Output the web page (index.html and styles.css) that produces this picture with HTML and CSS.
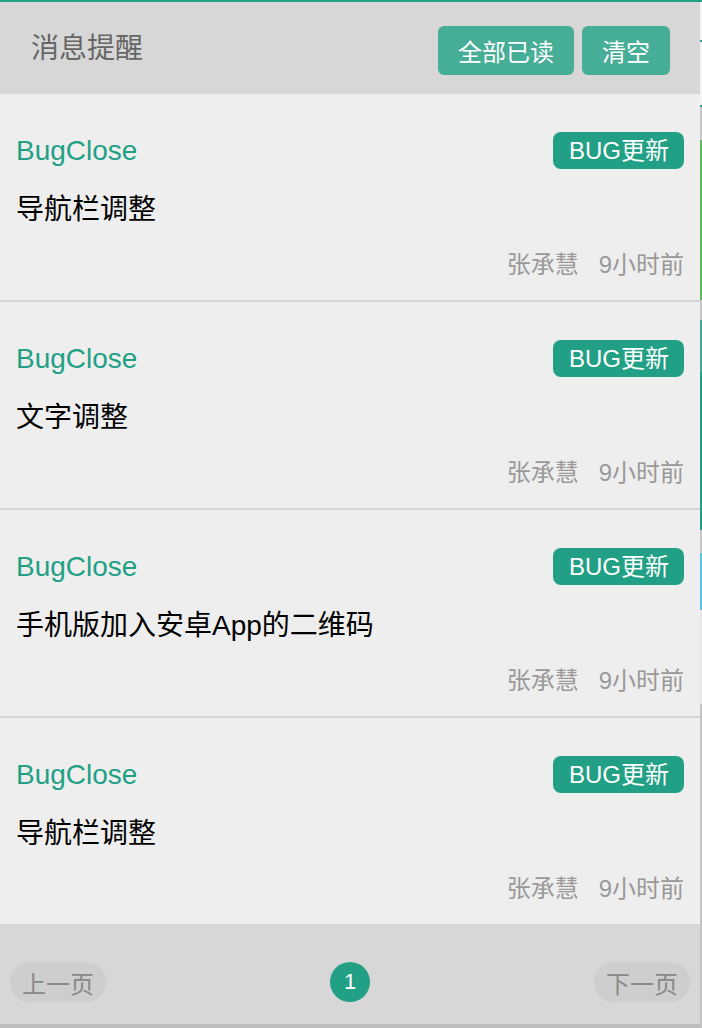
FILE: index.html
```html
<!DOCTYPE html>
<html lang="zh-CN">
<head>
<meta charset="utf-8">
<title>消息提醒</title>
<link rel="stylesheet" href="styles.css">
</head>
<body>
<div class="page">
  <div class="panel">
    <header class="head">
      <div class="head-title">消息提醒</div>
      <div class="head-actions">
        <button class="hbtn hbtn-wide">全部已读</button>
        <button class="hbtn">清空</button>
      </div>
    </header>
    <ul class="list">
      <li class="item">
        <div class="item-top"><span class="item-type">BugClose</span><span class="badge">BUG更新</span></div>
        <div class="item-text">导航栏调整</div>
        <div class="item-meta"><span>张承慧</span><span>9小时前</span></div>
      </li>
      <li class="item">
        <div class="item-top"><span class="item-type">BugClose</span><span class="badge">BUG更新</span></div>
        <div class="item-text">文字调整</div>
        <div class="item-meta"><span>张承慧</span><span>9小时前</span></div>
      </li>
      <li class="item">
        <div class="item-top"><span class="item-type">BugClose</span><span class="badge">BUG更新</span></div>
        <div class="item-text">手机版加入安卓App的二维码</div>
        <div class="item-meta"><span>张承慧</span><span>9小时前</span></div>
      </li>
      <li class="item item-last">
        <div class="item-top"><span class="item-type">BugClose</span><span class="badge">BUG更新</span></div>
        <div class="item-text">导航栏调整</div>
        <div class="item-meta"><span>张承慧</span><span>9小时前</span></div>
      </li>
    </ul>
    <footer class="pager">
      <button class="pbtn">上一页</button>
      <span class="pnum">1</span>
      <button class="pbtn">下一页</button>
    </footer>
  </div>
  <div class="edge"></div>
</div>
</body>
</html>
```

FILE: styles.css
```css
html, body {
  margin: 0;
  padding: 0;
  background: #ffffff;
}
body {
  font-family: "Liberation Sans", "Noto Sans CJK SC", sans-serif;
  width: 702px;
  height: 1028px;
  overflow: hidden;
}
.page {
  display: flex;
  border-top: 2px solid #22a085;
  height: 1026px;
}
.panel {
  width: 700px;
  display: flex;
  flex-direction: column;
  background: #eeeeee;
}
.edge {
  width: 2px;
  background: linear-gradient(to bottom,
    #f4f4f4 0px, #f4f4f4 38px,
    #22a085 38px, #22a085 40px,
    #f4f4f4 40px, #f4f4f4 103px,
    #22a085 103px, #22a085 105px,
    #c8c8c8 105px, #c8c8c8 138px,
    #5cb85c 138px, #5cb85c 298px,
    #c8c8c8 298px, #c8c8c8 318px,
    #4aa595 318px, #4aa595 370px,
    #22a085 370px, #22a085 528px,
    #c8c8c8 528px, #c8c8c8 551px,
    #5bc0de 551px, #5bc0de 608px,
    #e8e8e8 608px, #e8e8e8 702px,
    #c4c4c4 702px, #c4c4c4 1026px);
}
.head {
  height: 92px;
  background: #d7d7d7;
  display: flex;
  align-items: center;
  justify-content: space-between;
  padding: 0 30px 0 31px;
  box-sizing: border-box;
}
.head-title {
  font-size: 28px;
  color: #666666;
  margin-top: -4px;
}
.head-actions {
  display: flex;
  gap: 8px;
  margin-top: 4px;
}
.hbtn {
  border: none;
  background: #46ad97;
  color: #ffffff;
  font-family: inherit;
  font-size: 24px;
  height: 49px;
  width: 88px;
  border-radius: 6px;
  padding: 0;
}
.hbtn-wide {
  width: 136px;
}
.list {
  list-style: none;
  margin: 0;
  padding: 0;
}
.item {
  padding: 38px 16px 0 16px;
  border-bottom: 2px solid #d5d5d5;
  height: 208px;
  box-sizing: border-box;
}
.item-last {
  border-bottom: none;
  height: 206px;
}
.item-top {
  display: flex;
  align-items: center;
  justify-content: space-between;
  height: 37px;
}
.item-type {
  font-size: 28px;
  color: #22a085;
}
.badge {
  background: #22a085;
  color: #ffffff;
  font-size: 24px;
  height: 37px;
  line-height: 37px;
  padding: 0 15px 0 16px;
  border-radius: 8px;
}
.item-text {
  margin-top: 22px;
  font-size: 28px;
  line-height: 38px;
  color: #000000;
}
.item-meta {
  margin-top: 20px;
  display: flex;
  justify-content: flex-end;
  gap: 20px;
  font-size: 24px;
  line-height: 32px;
  color: #999999;
}
.pager {
  background: #d7d7d7;
  display: flex;
  align-items: flex-start;
  justify-content: space-between;
  padding: 38px 10px 0 10px;
  box-sizing: border-box;
  border-bottom: 4px solid #bdbdbd;
  margin-top: auto;
  height: 104px;
}
.pbtn {
  border: none;
  background: #cecece;
  color: #888888;
  font-family: inherit;
  font-size: 24px;
  width: 96px;
  height: 40px;
  border-radius: 20px;
  padding: 0;
}
.pnum {
  width: 40px;
  height: 40px;
  border-radius: 50%;
  background: #22a085;
  color: #ffffff;
  font-size: 22px;
  display: flex;
  align-items: center;
  justify-content: center;
}
```
